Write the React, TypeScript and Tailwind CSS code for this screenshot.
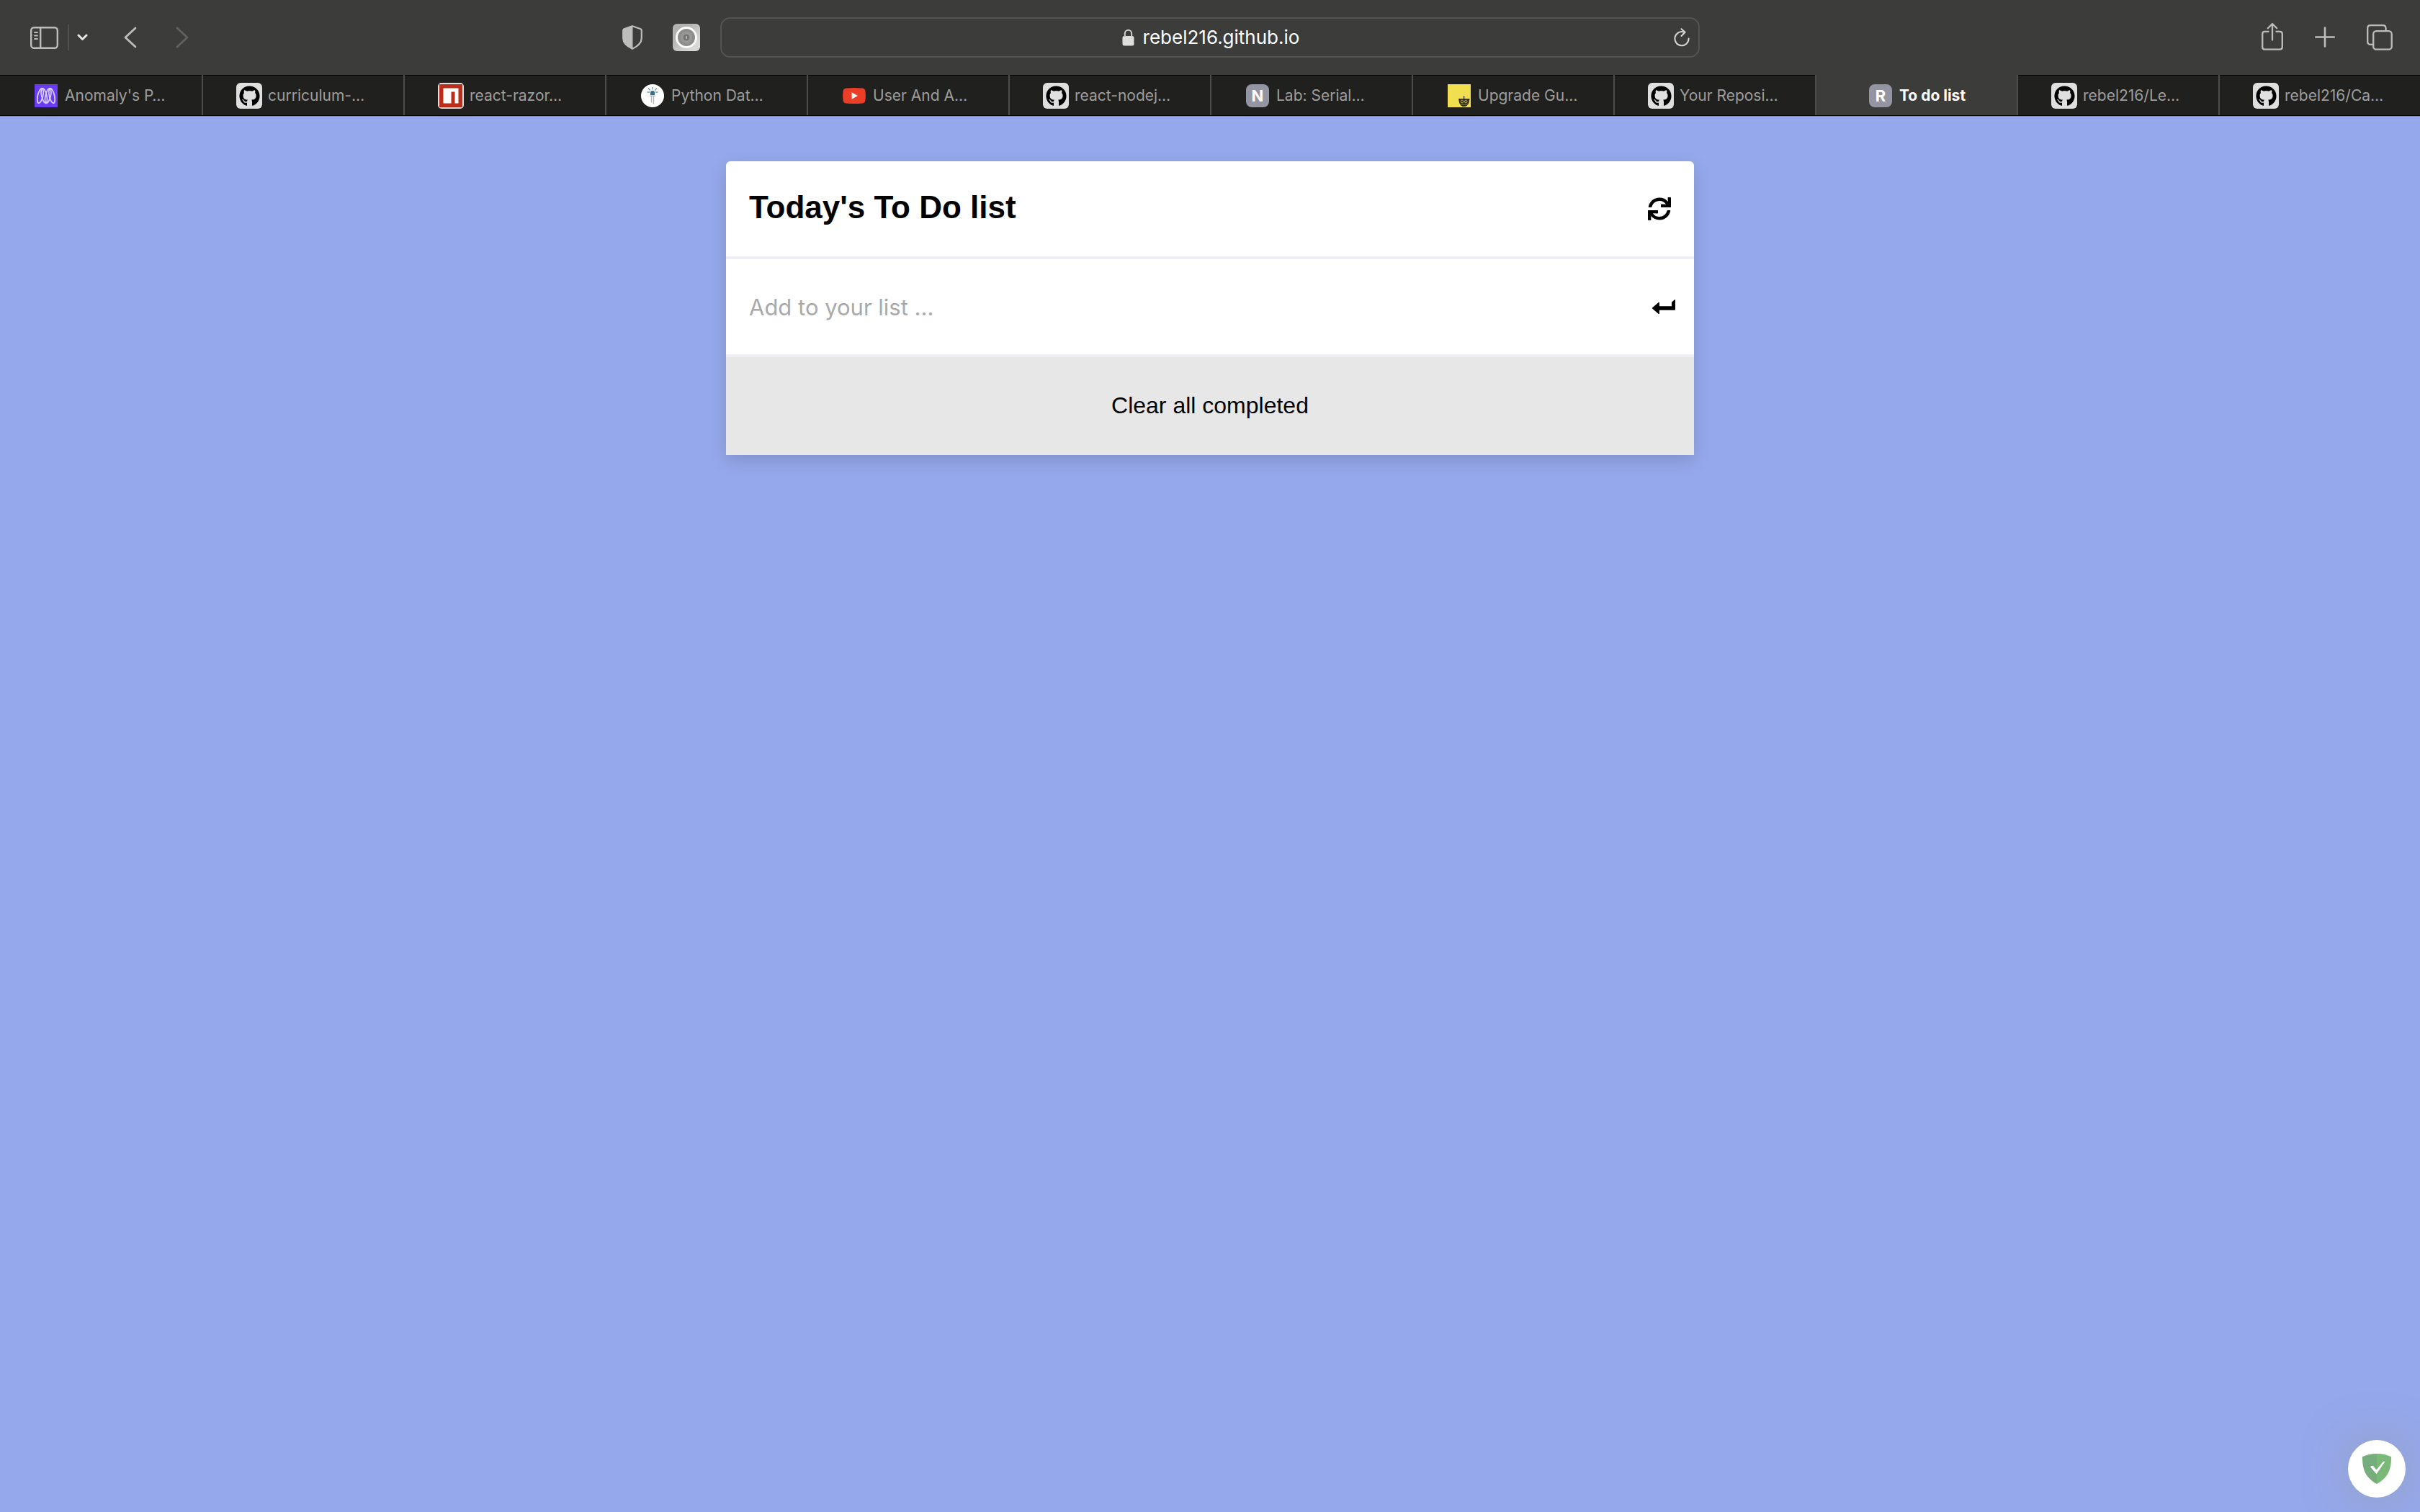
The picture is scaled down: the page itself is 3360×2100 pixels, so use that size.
import type { ReactNode } from "react";
import { FaGithub, FaSync } from "react-icons/fa";

const SidebarIcon = () => (
  <svg className="h-[31px] w-[39px]" viewBox="0 0 39 31" fill="none" stroke="#bdbdbb" strokeWidth="2.4" strokeLinecap="round">
    <rect x="1.2" y="1.2" width="36.6" height="28.6" rx="4" />
    <path d="M14.2 1.5v28" />
    <path d="M6 8h4M6 12.5h4M6 17h4" strokeWidth="1.8" />
  </svg>
);

const CaretIcon = () => (
  <svg className="h-[10px] w-[15px]" viewBox="0 0 15 10" fill="none" stroke="#e6e6e5" strokeWidth="3" strokeLinecap="round" strokeLinejoin="round">
    <path d="M2 2l5.500 5.500L13 2" />
  </svg>
);

const ChevronIcon = ({ forward = false }: { forward?: boolean }) => (
  <svg className="h-[30px] w-[18px]" viewBox="0 0 18 30" fill="none" stroke={forward ? "#626261" : "#bdbdbb"} strokeWidth="2.8" strokeLinecap="round" strokeLinejoin="round">
    <path d={forward ? "M2 2l14 13L2 28" : "M16 2L2 15l14 13"} />
  </svg>
);

const PrivacyIcon = () => (
  <svg className="h-[34px] w-[28px]" viewBox="0 0 28 34">
    <path d="M14 1.200L25.500 5.200Q26.800 5.800 26.800 7.200V18C26.800 25 21 29.500 14 32.800C7 29.500 1.200 25 1.200 18V7.200Q1.200 5.800 2.500 5.200Z" fill="none" stroke="#bdbdbb" strokeWidth="2.2" />
    <path d="M14.500 1L2.500 5.200Q1 5.800 1 7.200V18C1 25 7 29.500 14.500 33Z" fill="#bdbdbb" />
  </svg>
);

const ExtensionIcon = () => (
  <svg className="size-[38px]" viewBox="0 0 38 38">
    <defs>
      <linearGradient id="ext" x1="0" y1="0" x2="1" y2="1">
        <stop offset="0.300" stopColor="#b2b2b1" />
        <stop offset="0.800" stopColor="#d8d8d7" />
      </linearGradient>
    </defs>
    <rect width="38" height="38" rx="6" fill="url(#ext)" />
    <circle cx="19" cy="19" r="13.500" fill="#8d8d8b" stroke="#fcfcfc" strokeWidth="3" />
    <circle cx="19" cy="19" r="8" fill="#999997" />
    <circle cx="19" cy="19" r="4.500" fill="#777775" />
    <rect x="18" y="17" width="2" height="4" rx="1" fill="#b5b5b3" />
  </svg>
);

const LockIcon = () => (
  <svg className="h-[24px] w-[17px]" viewBox="0 0 17 24">
    <rect x="0.500" y="10" width="16" height="13.500" rx="2.500" fill="#dededd" />
    <path d="M3.800 11V6.500a4.700 4.700 0 0 1 9.400 0V11" fill="none" stroke="#cfcfce" strokeWidth="2" />
  </svg>
);

const ReloadIcon = () => (
  <svg className="h-[26px] w-[22px]" viewBox="0 0 22 26" fill="none" stroke="#d6d6d5" strokeWidth="2" strokeLinecap="round" strokeLinejoin="round">
    <path d="M13.500 5.400A9.600 9.600 0 1 0 20.600 14.600" />
    <path d="M10.500 1.200L15.600 5.800L10.500 11" />
  </svg>
);

const ShareIcon = () => (
  <svg className="h-[42px] w-[30px]" viewBox="0 0 30 42" fill="none" stroke="#bdbdbb" strokeWidth="2.300" strokeLinecap="round" strokeLinejoin="round">
    <path d="M9.500 12.800H4.500Q1.200 12.800 1.200 16V34.300Q1.200 37.600 4.500 37.600H25.500Q28.800 37.600 28.800 34.300V16Q28.800 12.800 25.500 12.800H20.500" />
    <path d="M15 24.500V2.200M8.800 8.200L15 2l6.200 6.200" />
  </svg>
);

const PlusIcon = () => (
  <svg className="h-[30px] w-[28px]" viewBox="0 0 28 30" stroke="#bdbdbb" strokeWidth="2.600" strokeLinecap="round">
    <path d="M14 1.500v26M1.300 14.500h25.400" />
  </svg>
);

const TabsIcon = () => (
  <svg className="size-[36px]" viewBox="0 0 36 36" fill="none" stroke="#bdbdbb" strokeWidth="2.300">
    <rect x="9.200" y="9.200" width="25.500" height="25.500" rx="4" />
    <path d="M8.500 27.800H5.200Q1.200 27.800 1.200 23.800V5.200Q1.200 1.200 5.200 1.200H22.500Q26.500 1.200 26.500 5.200V8.500" />
  </svg>
);

const GithubFavicon = () => (
  <span className="flex size-9 items-center justify-center rounded-md bg-[#dfdfdf]">
    <FaGithub className="size-[29px] text-black" />
  </span>
);

const AnomalyFavicon = () => (
  <svg className="size-8" viewBox="0 0 32 32">
    <rect width="32" height="32" fill="#6a3df5" />
    <g fill="none" stroke="#d9ccff" strokeWidth="1.800">
      <ellipse cx="8" cy="16" rx="3.600" ry="10.500" transform="rotate(13 8 16)" />
      <ellipse cx="13.300" cy="16" rx="3.600" ry="10.500" transform="rotate(-13 13.300 16)" />
      <ellipse cx="18.700" cy="16" rx="3.600" ry="10.500" transform="rotate(13 18.700 16)" />
      <ellipse cx="24" cy="16" rx="3.600" ry="10.500" transform="rotate(-13 24 16)" />
    </g>
  </svg>
);

const NpmFavicon = () => (
  <svg className="size-9" viewBox="0 0 36 36">
    <rect width="36" height="36" rx="5" fill="#dfdfdf" />
    <rect x="2" y="2" width="32" height="32" fill="#bb2e1b" />
    <path d="M7.500 7.500h21v21h-5v-16h-5v16h-11z" fill="#fff" />
  </svg>
);

const PythonFavicon = () => (
  <svg className="size-8" viewBox="0 0 32 32">
    <circle cx="16" cy="16" r="16" fill="#fff" />
    <path d="M13 15v-3a3 3 0 0 1 6 0v3z" fill="#3a6d8c" />
    <path d="M12.300 15.600h7.400v1.200h-7.400z" fill="#9aa3a8" />
    <path d="M14.500 17v8.500M17.500 17v10.500" stroke="#b4b4b4" strokeWidth="1.400" />
    <path d="M16 4v3.500M10 5.500l2.800 3M22 5.500l-2.800 3M8.500 11H12M20 11h3.500" stroke="#6c9ab2" strokeWidth="1.300" />
  </svg>
);

const YoutubeFavicon = () => (
  <svg className="h-[22px] w-8" viewBox="0 0 32 22">
    <path d="M4.500 0.600Q16-0.400 27.500 0.600Q31 1 31.400 4.500Q32.300 11 31.400 17.500Q31 21 27.500 21.400Q16 22.400 4.500 21.400Q1 21 0.600 17.500Q-0.300 11 0.600 4.500Q1 1 4.500 0.600Z" fill="#ea3e27" />
    <path d="M12.600 6.200L20.800 11l-8.200 4.800z" fill="#fff" />
  </svg>
);

const UpgradeFavicon = () => (
  <svg className="size-8" viewBox="0 0 32 32">
    <rect width="32" height="32" fill="#f2df50" />
    <path d="M22.600 16v4" stroke="#2c2a20" strokeWidth="1.200" />
    <path d="M15 20h15.500l-1 5.500q-2 5.500-6.800 5.500t-6.700-5.500z" fill="#2f2d22" />
    <circle cx="20" cy="24" r="1.800" fill="none" stroke="#c9b945" strokeWidth="0.900" />
    <circle cx="25.300" cy="24" r="1.800" fill="none" stroke="#c9b945" strokeWidth="0.900" />
    <path d="M17.500 28h10.500" stroke="#8d8237" strokeWidth="1" />
  </svg>
);

const LetterFavicon = ({ letter }: { letter: string }) => (
  <span className="flex size-8 items-center justify-center rounded-lg bg-[#9495a2] text-[22px] leading-8 font-bold text-white">
    {letter}
  </span>
);

const tabs: { label: string; icon: ReactNode; active?: boolean }[] = [
  { label: "Anomaly's P…", icon: <AnomalyFavicon /> },
  { label: "curriculum-…", icon: <GithubFavicon /> },
  { label: "react-razor…", icon: <NpmFavicon /> },
  { label: "Python Dat…", icon: <PythonFavicon /> },
  { label: "User And A…", icon: <YoutubeFavicon /> },
  { label: "react-nodej…", icon: <GithubFavicon /> },
  { label: "Lab: Serial…", icon: <LetterFavicon letter="N" /> },
  { label: "Upgrade Gu…", icon: <UpgradeFavicon /> },
  { label: "Your Reposi…", icon: <GithubFavicon /> },
  { label: "To do list", icon: <LetterFavicon letter="R" />, active: true },
  { label: "rebel216/Le…", icon: <GithubFavicon /> },
  { label: "rebel216/Ca…", icon: <GithubFavicon /> },
];

const ReturnIcon = () => (
  <svg className="h-5 w-8" viewBox="0 0 32 20">
    <path d="M0.300 11.200Q-0.300 12 0.300 12.800L8.500 19.700Q10 20.300 10 19V14.700H31Q32 14.700 32 13.700V0.800Q32-0.300 31 0.300L27.600 3.300Q27 3.800 27 4.600V9.300H10V5Q10 3.700 8.500 4.300Z" fill="#000" />
  </svg>
);

function Toolbar() {
  return (
    <div className="grid h-[104px] grid-cols-[1fr_40.5%_1fr] items-center bg-[#3c3c3a]">
      <div className="flex items-center pr-7 pl-[42px]">
        <button aria-label="Show sidebar"><SidebarIcon /></button>
        <span className="ml-[13px] h-9 w-[2px] bg-[#50504f]" />
        <button aria-label="Tab groups" className="ml-[11px]"><CaretIcon /></button>
        <button aria-label="Back" className="ml-[50px]"><ChevronIcon /></button>
        <button aria-label="Forward" className="ml-[54px]"><ChevronIcon forward /></button>
        <button aria-label="Privacy report" className="ml-auto"><PrivacyIcon /></button>
        <button aria-label="Extension" className="ml-[42px]"><ExtensionIcon /></button>
      </div>
      <div className="flex h-14 items-center rounded-[14px] border-2 border-[#535352] pr-3">
        <button className="flex flex-1 items-center justify-center gap-3 pl-9 text-[26px] leading-8 text-white">
          <LockIcon />
          <span>rebel216.github.io</span>
        </button>
        <button aria-label="Reload page"><ReloadIcon /></button>
      </div>
      <div className="flex items-center justify-end pr-[38px]">
        <button aria-label="Share"><ShareIcon /></button>
        <button aria-label="New tab" className="ml-11"><PlusIcon /></button>
        <button aria-label="Tab overview" className="ml-11"><TabsIcon /></button>
      </div>
    </div>
  );
}

function TabBar() {
  return (
    <div role="tablist" className="grid h-[57px] grid-cols-12 border-b border-black">
      {tabs.map((tab) => (
        <button
          key={tab.label}
          role="tab"
          aria-selected={!!tab.active}
          className={
            tab.active
              ? "flex min-w-0 items-center justify-center gap-2 border-l-2 border-[#4d4d4c] bg-[#3c3c3a] pt-0.5 text-[21px] font-bold text-white"
              : "flex min-w-0 items-center gap-2 border-l-2 border-[#4d4d4c] bg-[#20201f] pt-0.5 pl-[46px] text-[21px] text-[#9e9e9c] shadow-[inset_0_1px_0_#000] first:border-l-0"
          }
        >
          <span className="flex w-9 shrink-0 justify-center">{tab.icon}</span>
          <span className="whitespace-nowrap">{tab.label}</span>
        </button>
      ))}
    </div>
  );
}

function TodoCard() {
  return (
    <section className="mx-auto w-2/5 rounded-t-md bg-white font-['Liberation_Sans',Arial,sans-serif] text-black shadow-[0_8px_24px_rgba(0,0,0,0.14)]">
      <div className="flex h-[136px] items-center justify-between border-b-4 border-[#eff0f5] px-8">
        <h1 className="pb-1 text-[44px] leading-[52px] font-bold">Today's To Do list</h1>
        <button aria-label="Refresh"><FaSync className="size-8" /></button>
      </div>
      <form className="flex h-[136px] items-center border-b-4 border-[#eff0f5] pr-[26px] pl-8" onSubmit={(e) => e.preventDefault()}>
        <input
          aria-label="Add to your list"
          placeholder="Add to your list ..."
          className="min-w-0 flex-1 pt-0.5 font-[Inter,sans-serif] text-[31px] leading-10 outline-none placeholder:text-[#a9a9a9]"
        />
        <button aria-label="Add item"><ReturnIcon /></button>
      </form>
      <button className="h-[136px] w-full bg-[#e7e7e7] pb-0.5 text-[32px]">Clear all completed</button>
    </section>
  );
}

export default function App() {
  return (
    <div className="flex min-h-screen flex-col bg-[#95a8eb] font-[Inter,sans-serif]">
      <header>
        <Toolbar />
        <TabBar />
      </header>
      <main className="flex-1 border-t border-[#7683b3] pt-[62px]">
        <TodoCard />
      </main>
      <button
        aria-label="Ad blocker"
        className="fixed right-5 bottom-5 flex size-20 items-center justify-center rounded-full bg-white shadow-[0_0_60px_rgba(150,150,150,0.500)]"
      >
        <svg className="h-[42px] w-10" viewBox="0 0 40 42">
          <path d="M20 0C13 0 6 1.500 0 4.200C0 19 2 32 20 42z" fill="#76ad7d" />
          <path d="M20 0C27 0 34 1.500 40 4.200C40 19 38 32 20 42z" fill="#7bb979" />
          <path d="M11 18.200Q13 15.500 15.500 17.500L19.500 22.500L28.500 11.500Q30 10.300 31.500 11L19.500 28.200Z" fill="#fff" />
        </svg>
      </button>
    </div>
  );
}
